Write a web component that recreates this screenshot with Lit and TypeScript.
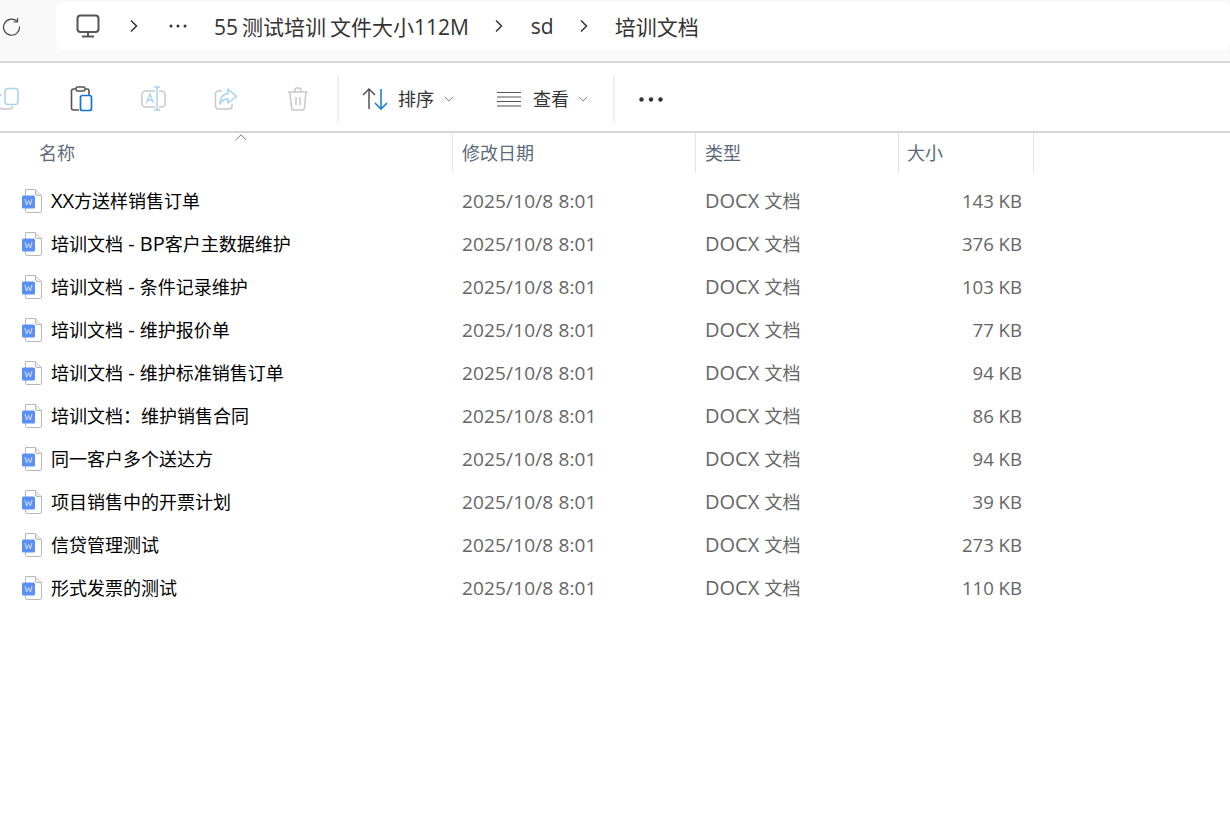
import { LitElement, html, css, svg } from "lit";
import { customElement } from "lit/decorators.js";

const FILES: [string, string][] = [
  ["XX方送样销售订单", "143 KB"],
  ["培训文档 - BP客户主数据维护", "376 KB"],
  ["培训文档 - 条件记录维护", "103 KB"],
  ["培训文档 - 维护报价单", "77 KB"],
  ["培训文档 - 维护标准销售订单", "94 KB"],
  ["培训文档：维护销售合同", "86 KB"],
  ["同一客户多个送达方", "94 KB"],
  ["项目销售中的开票计划", "39 KB"],
  ["信贷管理测试", "273 KB"],
  ["形式发票的测试", "110 KB"],
];

const latin = (t: string) =>
  t.split(/([A-Za-z\- ]+)/).map((p, i) => (i % 2 ? html`<span class="lat">${p}</span>` : p));

const chevron = (cls: string) => html`<svg class="crumb-sep ${cls}" width="10" height="14" viewBox="0 0 10 14"><path d="M2 1.5 7.5 7 2 12.5" fill="none" stroke="#333" stroke-width="1.5"/></svg>`;
const small = html`<svg class="small" width="10" height="6" viewBox="0 0 10 6"><path d="M.7.7 5 5 9.3.7" fill="none" stroke="#8a8a8a" stroke-width="1"/></svg>`;
const G = "#c9c9c9";
const B = "#a9d3f3";

const docIcon = svg`<svg class="doc" width="22" height="26" viewBox="0 0 22 26">
  <path d="M4.500 2.500H14.500L20.500 8.500V24a1.500 1.500 0 0 1-1.500 1.500H6A1.500 1.500 0 0 1 4.500 24Z" fill="#fff" stroke="#b8b8b8"/>
  <path d="M14.500 2.500V7A1.500 1.500 0 0 0 16 8.500h4.500" fill="#ececec" stroke="#b8b8b8"/>
  <rect x="1" y="8.500" width="13" height="13" rx="1.500" fill="#5a8ff5"/>
  <path d="M4 12 5.600 18 7.500 13.500 9.400 18 11 12" fill="none" stroke="#dfeaff" stroke-width=".9"/>
</svg>`;

@customElement("app-root")
export class AppRoot extends LitElement {
  static styles = css`
    :host {
      display: block;
      width: 1230px;
      height: 816px;
      overflow: hidden;
      background: #fff;
      font-family: "Open Sans", "Noto Sans CJK SC", sans-serif;
      color: #1a1a1a;
    }
    .addr {
      background: #f9f9f9;
      border-bottom: 2px solid #d6d6d6;
      display: flex;
      padding: 2px 0 0 0;
      height: 59px;
    }
    .refresh { width: 56px; height: 48px; flex: none; }
    .refresh svg { display: block; margin: 15px 0 0 2px; }
    .crumbs {
      flex: 1;
      height: 48px;
      background: #fff;
      border-radius: 7px;
      display: flex;
      align-items: center;
      font-size: 21px;
      color: #333;
      white-space: nowrap;
      padding-left: 20px;
    }
    .crumbs .pc { margin-right: 29px; display: block; }
    .crumb-sep { flex: none; margin-right: 30px; }
    .crumb-sep.c2 { margin-right: 27px; }
    .crumb-sep.c3 { margin-right: 26px; }
    .dots { margin-right: 27px; display: block; }
    .crumbs .t1 { margin-right: 25px; word-spacing: -1.5px; }
    .crumbs .t2 { margin-right: 25px; }
    .bar {
      height: 64px;
      padding-top: 4px;
      border-bottom: 2px solid #d6d6d6;
      display: flex;
      align-items: center;
      margin-left: -26px;
      font-size: 18px;
      color: #333;
    }
    .ib { width: 72px; height: 44px; display: flex; align-items: center; justify-content: center; flex: none; }
    .sep { width: 2px; height: 48px; background: #efefef; flex: none; }
    .sep.s1 { margin-left: 3px; }
    .sep.s2 { margin-left: 25px; }
    .sort { display: flex; align-items: center; margin-left: 23px; }
    .view { display: flex; align-items: center; margin-left: 43px; }
    .label { margin: -2px 10px 0 10px; }
    .view .label { margin: -2px 9px 0 12px; }
    .more { margin-left: 24px; display: block; }
    .head {
      height: 40px;
      display: grid;
      grid-template-columns: 453px 243px 203px 135px;
      width: 1034px;
      font-size: 18px;
      color: #5c6b7a;
      position: relative;
    }
    .hc {
      border-right: 1px solid #e5e5e5;
      padding-left: 9px;
      line-height: 40px;
      box-sizing: border-box;
    }
    .hc.name { padding-left: 39px; }
    .hc.size { padding-left: 8px; }
    .caret { position: absolute; left: 235px; top: 1px; display: block; }
    .list { padding-top: 5px; }
    .row {
      height: 43px;
      display: grid;
      grid-template-columns: 453px 243px 203px 135px;
      width: 1034px;
      align-items: center;
      font-size: 18px;
      color: #666;
    }
    .lat { font-size: 20px; line-height: 1; }
    .n { display: flex; align-items: center; padding-left: 21px; color: #000; white-space: pre; }
    .doc { flex: none; margin-right: 8px; display: block; }
    .d { padding: 2px 0 0 9px; white-space: nowrap; font-size: 19px; letter-spacing: .15px; }
    .y { padding-left: 9px; white-space: pre; }
    .s { text-align: right; padding: 2px 12px 0 0; white-space: nowrap; font-size: 18.6px; }
  `;

  render() {
    return html`
      <div class="addr">
        <div class="refresh">
          <svg width="20" height="20" viewBox="0 0 20 20"><path d="M17.500 9.500a8 8 0 1 1-2.600-5.200" fill="none" stroke="#444" stroke-width="1.200"/><path d="M15.500 1v4h-4" fill="none" stroke="#444" stroke-width="1.200"/></svg>
        </div>
        <div class="crumbs">
          <svg class="pc" width="24" height="24" viewBox="0 0 24 24"><rect x="1.500" y="1.500" width="21" height="16.500" rx="3" fill="none" stroke="#555" stroke-width="2"/><path d="M12 18v4M6 22.500h12" stroke="#555" stroke-width="2" fill="none"/></svg>
          ${chevron("c1")}
          <svg class="dots" width="18" height="4" viewBox="0 0 18 4"><circle cx="2" cy="2" r="1.500" fill="#333"/><circle cx="9" cy="2" r="1.500" fill="#333"/><circle cx="16" cy="2" r="1.500" fill="#333"/></svg>
          <span class="t1">55 测试培训 文件大小112M</span>
          ${chevron("c2")}
          <span class="t2">sd</span>
          ${chevron("c3")}
          <span>培训文档</span>
        </div>
      </div>
      <div class="bar">
        <div class="ib"><svg width="24" height="24" viewBox="0 0 24 24"><path d="M4 7.500A3 3 0 0 0 1 10.500v8A3.500 3.500 0 0 0 4.500 22h7a3 3 0 0 0 3-3" fill="none" stroke="${G}" stroke-width="1.500"/><rect x="7" y="1.500" width="13" height="16" rx="3" fill="#fff" stroke="${B}" stroke-width="1.600"/></svg></div>
        <div class="ib"><svg width="24" height="26" viewBox="0 0 24 26"><path d="M9 24H3.500A2 2 0 0 1 1.500 22V5A2 2 0 0 1 3.500 3H17a2 2 0 0 1 2 2v4" fill="none" stroke="#555" stroke-width="1.600"/><rect x="6" y="1" width="9" height="4" rx="1.500" fill="#fff" stroke="#555" stroke-width="1.500"/><rect x="10.500" y="9.500" width="11" height="15" rx="2" fill="#fff" stroke="#0f78d4" stroke-width="1.700"/></svg></div>
        <div class="ib"><svg width="26" height="26" viewBox="0 0 26 26"><rect x="1" y="5" width="23" height="16" rx="3.500" fill="none" stroke="${G}" stroke-width="1.500"/><rect x="14" y="3" width="4" height="21" fill="#fff"/><path d="M13 1h6M16 1v23M13 24h6" fill="none" stroke="${B}" stroke-width="1.500"/><path d="M5.500 17 9 8l3.500 9M6.800 14h4.500" fill="none" stroke="${B}" stroke-width="1.400"/></svg></div>
        <div class="ib"><svg width="24" height="24" viewBox="0 0 24 24"><path d="M8 4H4.500A3 3 0 0 0 1.500 7v12a3 3 0 0 0 3 3H15a3 3 0 0 0 3-3v-2" fill="none" stroke="${G}" stroke-width="1.500"/><path d="M14 2l8.500 7.500L14 16v-4c-4 0-6.500 1.500-8 5 0-6 3-10 8-10.500Z" fill="#fff" stroke="${B}" stroke-width="1.500" stroke-linejoin="round"/></svg></div>
        <div class="ib"><svg width="22" height="24" viewBox="0 0 22 24"><path d="M1 5h20M8 5V3a2 2 0 0 1 2-2h2a2 2 0 0 1 2 2v2M3 5l1.500 15.500A2.500 2.500 0 0 0 7 23h8a2.500 2.500 0 0 0 2.500-2.500L19 5M9 10v8M13 10v8" fill="none" stroke="${G}" stroke-width="1.500"/></svg></div>
        <div class="sep s1"></div>
        <div class="sort">
          <svg width="26" height="22" viewBox="0 0 26 22"><path d="M1 7l6-6 6 6M7 1v20" fill="none" stroke="#555" stroke-width="1.500"/><path d="M13 15l6 6 6-6M19 1v20" fill="none" stroke="#0f78d4" stroke-width="1.500"/></svg>
          <span class="label">排序</span>${small}
        </div>
        <div class="view">
          <svg width="24" height="16" viewBox="0 0 24 16"><path d="M0 1.500h24M0 6h24M0 10.500h24M0 15h24" stroke="#555" stroke-width="1.200" fill="none"/></svg>
          <span class="label">查看</span>${small}
        </div>
        <div class="sep s2"></div>
        <svg class="more" width="24" height="5" viewBox="0 0 24 5"><circle cx="2.500" cy="2.500" r="2.200" fill="#333"/><circle cx="12" cy="2.500" r="2.200" fill="#333"/><circle cx="21.500" cy="2.500" r="2.200" fill="#333"/></svg>
      </div>
      <div class="head">
        <svg class="caret" width="12" height="7" viewBox="0 0 12 7"><path d="M.7 6 6 .8 11.300 6" fill="none" stroke="#777" stroke-width="1"/></svg>
        <div class="hc name">名称</div>
        <div class="hc">修改日期</div>
        <div class="hc">类型</div>
        <div class="hc size">大小</div>
      </div>
      <div class="list">
        ${FILES.map(
          ([n, s]) => html`<div class="row">
            <div class="n">${docIcon}<span>${latin(n)}</span></div>
            <div class="d">2025/10/8 8:01</div>
            <div class="y">${latin("DOCX 文档")}</div>
            <div class="s">${s}</div>
          </div>`
        )}
      </div>
    `;
  }
}
